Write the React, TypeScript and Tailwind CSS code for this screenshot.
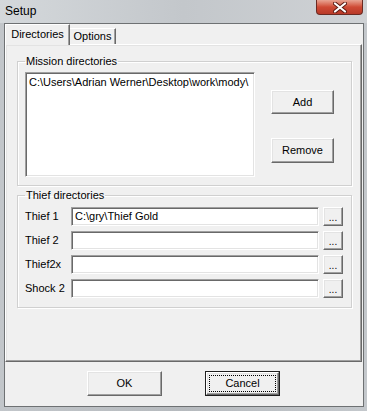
import React from "react";

const raised =
  "bg-[#f0f0f0] border border-t-white border-l-white border-r-[#696969] border-b-[#696969] shadow-[inset_-1px_-1px_0_#a0a0a0,inset_1px_1px_0_#e3e3e3]";
const sunken =
  "bg-white border border-t-[#a0a0a0] border-l-[#a0a0a0] border-r-white border-b-white shadow-[inset_1px_1px_0_#696969,inset_-1px_-1px_0_#e3e3e3]";
const etched = "border border-[#d0d0d0] shadow-[1px_1px_0_white,inset_1px_1px_0_white]";

function CloseButton() {
  return (
    <div className="w-[47px] h-[15px] rounded-b-[4px] border border-t-0 border-[#6b2a22] bg-gradient-to-b from-[#e8a493] via-[#cf4a35] to-[#b83a28] flex items-center justify-center">
      <svg width="14" height="11" viewBox="0 0 14 11">
        <path d="M2 1.5 L12 9.5 M12 1.5 L2 9.5" stroke="#5a1a12" strokeWidth="4" strokeLinecap="round" />
        <path d="M2 1.5 L12 9.5 M12 1.5 L2 9.5" stroke="white" strokeWidth="2.2" strokeLinecap="round" />
      </svg>
    </div>
  );
}

function Button({ label, className = "" }: { label: string; className?: string }) {
  return (
    <div className={`${raised} flex items-center justify-center ${className}`}>
      <span>{label}</span>
    </div>
  );
}

function PathRow({ label, value }: { label: string; value?: string }) {
  return (
    <div className="flex items-center h-[19px]">
      <span className="w-[46px] shrink-0">{label}</span>
      <div className={`${sunken} w-[248px] h-[19px] flex items-center pl-[3px] whitespace-nowrap overflow-hidden`}>
        {value}
      </div>
      <Button label="..." className="w-[20px] h-[19px] ml-[4px] text-[10px] pt-[2px]" />
    </div>
  );
}

export default function App() {
  return (
    <div className="w-[367px] h-[411px] flex flex-col bg-gradient-to-r from-[#c2c6ca] via-[#b6babe] to-[#c4c8cc] font-['Liberation_Sans',sans-serif] text-[11px] leading-[13px] text-black">
      <div className="h-[23px] shrink-0 flex items-start justify-between pl-[5px] pr-[4px] bg-gradient-to-r from-[#d4d8db] via-[#c3c7cb] to-[#cfd2d5]">
        <span className="text-[12px] leading-[14px] mt-[4px]">Setup</span>
        <CloseButton />
      </div>
      <div className="flex-1 ml-[4px] mr-[3px] mb-[4px] bg-[#f0f0f0] border border-[#6e7173] flex flex-col">
        {/* tab control */}
        <div className="flex flex-col mr-[1px]">
          <div className="flex items-end h-[20px]">
            <div className="relative z-10 w-[65px] h-[21px] -mb-[1px] bg-[#f0f0f0] border-t border-l border-white border-r border-r-[#696969] shadow-[inset_-1px_0_0_#a0a0a0] flex items-center justify-center pb-[1px]">
              Directories
            </div>
            <div className="w-[46px] h-[16px] border-t border-white border-r border-r-[#696969] shadow-[inset_-1px_0_0_#a0a0a0] flex items-center justify-center">
              Options
            </div>
          </div>
          <div className={`${raised} h-[318px] pl-[11px] pr-[9px] pt-[10px] flex flex-col`}>
            <fieldset className={`${etched} px-[7px] pt-[4px] pb-[8px]`}>
              <legend className="px-[1px] leading-[13px]">Mission directories</legend>
              <div className="flex">
                <div className={`${sunken} w-[230px] h-[105px] pl-[3px] pt-[3px] whitespace-nowrap overflow-hidden`}>
                  C:\Users\Adrian Werner\Desktop\work\mody\
                </div>
                <div className="flex flex-col ml-[16px] pt-[18px] gap-[24px]">
                  <Button label="Add" className="w-[63px] h-[24px]" />
                  <Button label="Remove" className="w-[63px] h-[25px]" />
                </div>
              </div>
            </fieldset>
            <fieldset className={`${etched} mt-[3px] pl-[7px] pr-[7px] pt-[5px] pb-[9px]`}>
              <legend className="px-[1px] leading-[13px]">Thief directories</legend>
              <div className="flex flex-col gap-[5px]">
                <PathRow label="Thief 1" value="C:\gry\Thief Gold" />
                <PathRow label="Thief 2" />
                <PathRow label="Thief2x" />
                <PathRow label="Shock 2" />
              </div>
            </fieldset>
          </div>
        </div>
        {/* dialog buttons */}
        <div className="flex pl-[82px] pt-[9px] gap-[43px]">
          <Button label="OK" className="w-[75px] h-[25px]" />
          <div className="w-[75px] h-[25px] border border-[#1e1e1e] flex">
            <div className={`${raised} flex-1 p-[2px] flex`}>
              <div className="flex-1 border border-dotted border-black flex items-center justify-center">
                Cancel
              </div>
            </div>
          </div>
        </div>
      </div>
    </div>
  );
}
